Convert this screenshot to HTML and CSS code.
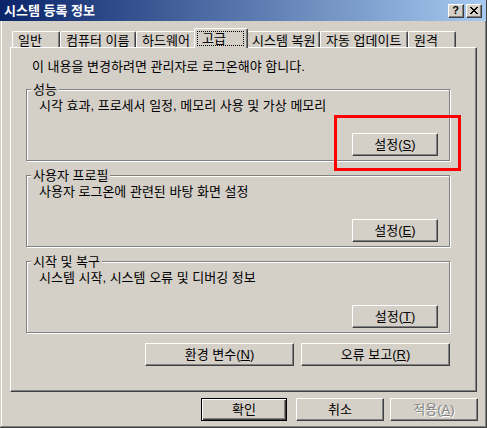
FILE: index.html
```html
<!DOCTYPE html>
<html lang="ko">
<head>
<meta charset="utf-8">
<title>시스템 등록 정보</title>
<link rel="stylesheet" href="styles.css">
</head>
<body>
<div class="window">
  <div class="titlebar">
    <span class="title">시스템 등록 정보</span>
    <div class="tb-buttons">
      <span class="tb-btn help">?</span>
      <span class="tb-btn close">
        <svg width="8" height="7" viewBox="0 0 8 7" shape-rendering="crispEdges">
          <rect x="0" y="0" width="2" height="1"/><rect x="6" y="0" width="2" height="1"/>
          <rect x="1" y="1" width="2" height="1"/><rect x="5" y="1" width="2" height="1"/>
          <rect x="2" y="2" width="4" height="1"/>
          <rect x="3" y="3" width="2" height="1"/>
          <rect x="2" y="4" width="4" height="1"/>
          <rect x="1" y="5" width="2" height="1"/><rect x="5" y="5" width="2" height="1"/>
          <rect x="0" y="6" width="2" height="1"/><rect x="6" y="6" width="2" height="1"/>
        </svg>
      </span>
    </div>
  </div>
  <div class="content">
    <div class="tabs">
      <div class="tab t-general">일반</div>
      <div class="tab t-computer">컴퓨터 이름</div>
      <div class="tab t-hardware">하드웨어</div>
      <div class="tab tab-active"><span class="focus">고급</span></div>
      <div class="tab t-restore">시스템 복원</div>
      <div class="tab t-update">자동 업데이트</div>
      <div class="tab t-remote">원격</div>
    </div>
    <div class="panel">
      <p class="intro">이 내용을 변경하려면 관리자로 로그온해야 합니다.</p>
      <div class="groups">
        <div class="group">
          <span class="legend">성능</span>
          <p class="desc">시각 효과, 프로세서 일정, 메모리 사용 및 가상 메모리</p>
          <button class="btn btn-set">설정(<u>S</u>)</button>
        </div>
        <div class="group">
          <span class="legend">사용자 프로필</span>
          <p class="desc">사용자 로그온에 관련된 바탕 화면 설정</p>
          <button class="btn btn-set">설정(<u>E</u>)</button>
        </div>
        <div class="group">
          <span class="legend">시작 및 복구</span>
          <p class="desc">시스템 시작, 시스템 오류 및 디버깅 정보</p>
          <button class="btn btn-set">설정(<u>T</u>)</button>
        </div>
      </div>
      <div class="panel-buttons">
        <button class="btn btn-wide">환경 변수(<u>N</u>)</button>
        <button class="btn btn-wide">오류 보고(<u>R</u>)</button>
      </div>
    </div>
    <div class="dialog-buttons">
      <button class="btn btn-default btn-ok">확인</button>
      <button class="btn btn-cancel">취소</button>
      <button class="btn btn-apply" disabled>적용(<u>A</u>)</button>
    </div>
  </div>
  <div class="highlight"></div>
</div>
</body>
</html>
```
FILE: styles.css
```css
* { box-sizing: border-box; }

html, body {
  margin: 0;
  padding: 0;
  background: #D4D0C8;
}

body {
  font: 13px "Liberation Sans", "Noto Sans CJK KR", sans-serif;
  color: #000;
}

.window {
  position: relative;
  width: 487px;
  height: 428px;
  background: #D4D0C8;
  box-shadow:
    inset -1px -1px 0 #404040,
    inset 1px 0 0 #D4D0C8,
    inset -2px -2px 0 #808080,
    inset 2px 0 0 #fff;
}

.titlebar {
  height: 21px;
  margin-right: 1px;
  padding: 0 4px;
  display: flex;
  align-items: center;
  justify-content: space-between;
  background: linear-gradient(to right, #0A246A, #A6CAF0);
}

.title {
  color: #fff;
  font-weight: bold;
  font-size: 13px;
  line-height: 14px;
  padding-top: 1px;
}

.tb-buttons {
  display: flex;
  gap: 2px;
}

.tb-btn {
  width: 16px;
  height: 14px;
  display: flex;
  align-items: center;
  justify-content: center;
  background: #D4D0C8;
  border: 1px solid;
  border-color: #fff #404040 #404040 #fff;
  box-shadow: inset -1px -1px 0 #808080;
}

.help {
  font: bold 11px "Liberation Sans", sans-serif;
  line-height: 11px;
  padding-right: 1px;
}

.close svg {
  display: block;
  fill: #000;
  margin-right: 1px;
}

.content {
  padding: 7px 10px 0;
}

.tabs {
  display: flex;
  align-items: flex-end;
  padding-left: 2px;
}

.tab {
  height: 16px;
  padding: 2px 0 0 5px;
  line-height: 14px;
  white-space: nowrap;
  border-left: 1px solid #fff;
  border-top: 1px solid #fff;
  border-right: 1px solid #404040;
  border-radius: 2px 2px 0 0;
  box-shadow: inset -1px 0 0 #808080;
}

.t-general { width: 48px; }
.t-computer { width: 76px; }
.t-hardware { width: 60px; }
.t-restore { width: 74px; }
.t-update { width: 88px; }
.t-remote { width: 48px; }

.tab-active {
  position: relative;
  z-index: 1;
  width: 54px;
  height: 20px;
  margin: 0 -2px -1px;
  padding: 2px 3px 2px 2px;
  background: #D4D0C8;
}

.focus {
  display: block;
  height: 15px;
  border: 1px dotted #000;
  padding: 0 0 0 4px;
  line-height: 13px;
}

.panel {
  height: 345px;
  padding: 12px 0 0 15px;
  border: 1px solid;
  border-color: #fff #404040 #404040 #fff;
  box-shadow: inset -1px -1px 0 #808080;
}

.intro {
  margin: 0 0 15px 6px;
  line-height: 14px;
}

.groups {
  width: 424px;
  display: flex;
  flex-direction: column;
  gap: 14px;
}

.group {
  position: relative;
  height: 72px;
  display: flex;
  flex-direction: column;
  border: 1px solid #808080;
  box-shadow: 1px 1px 0 #fff, inset 1px 1px 0 #fff;
}

.legend {
  position: absolute;
  top: -7px;
  left: 4px;
  padding: 0 2px;
  line-height: 14px;
  background: #D4D0C8;
}

.desc {
  margin: 0;
  padding: 9px 0 0 12px;
  line-height: 14px;
}

.btn {
  height: 23px;
  padding: 1px 0 0;
  margin: 0;
  display: flex;
  align-items: center;
  justify-content: center;
  font: inherit;
  color: #000;
  background: #D4D0C8;
  border: 1px solid;
  border-color: #fff #404040 #404040 #fff;
  border-radius: 0;
  box-shadow: inset -1px -1px 0 #808080;
  line-height: 14px;
}

.btn u {
  text-underline-offset: 1px;
}

.btn-set {
  width: 86px;
  margin-top: auto;
  margin-right: 11px;
  margin-bottom: 4px;
  align-self: flex-end;
}

.panel-buttons {
  width: 424px;
  margin-top: 10px;
  display: flex;
  justify-content: flex-end;
  gap: 7px;
}

.btn-wide {
  width: 149px;
}

.dialog-buttons {
  margin-top: 6px;
  margin-right: -1px;
  display: flex;
  justify-content: flex-end;
}

.btn-default {
  border: 1px solid #000;
  box-shadow:
    inset 1px 1px 0 #fff,
    inset -1px -1px 0 #404040,
    inset -2px -2px 0 #808080;
}

.btn-ok {
  width: 86px;
  margin-right: 9px;
}

.btn-cancel {
  width: 88px;
  margin-right: 6px;
}

.btn-apply {
  width: 88px;
  color: #808080;
  text-shadow: 1px 1px 0 #fff;
}

.highlight {
  position: absolute;
  left: 334px;
  top: 115px;
  width: 127px;
  height: 56px;
  border: 3px solid #f00;
}
```
